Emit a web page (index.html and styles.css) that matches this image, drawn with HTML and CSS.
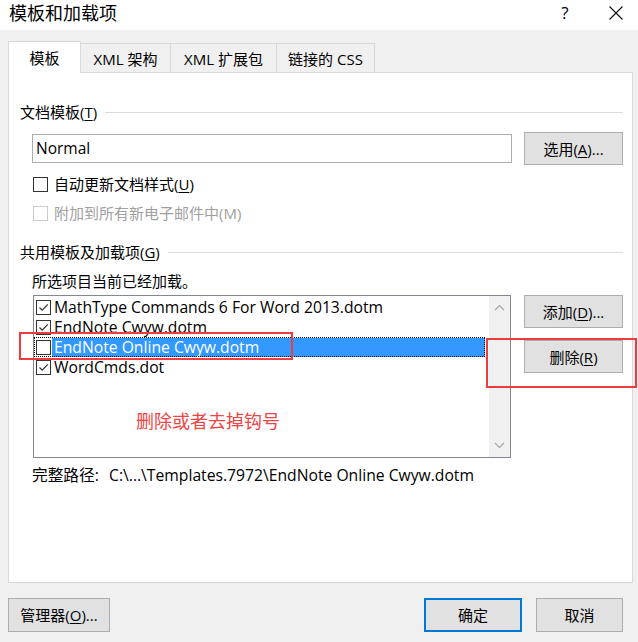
FILE: index.html
```html
<!DOCTYPE html>
<html lang="zh-CN">
<head>
  <meta charset="UTF-8" />
  <title>模板和加载项</title>
  <link rel="stylesheet" href="styles.css">
</head>
<body>

<div class="titlebar">
  <span class="title">模板和加载项</span>
  <span class="help">?</span>
  <span class="close">
    <svg width="16" height="16" viewBox="0 0 16 16"><path d="M1.5 1.5L14.5 14.5M14.5 1.5L1.5 14.5" stroke="#111" stroke-width="1.1" fill="none"/></svg>
  </span>
</div>

<div class="tabs">
  <div class="tab active">模板</div>
  <div class="tab tab-xml">XML 架构</div>
  <div class="tab tab-ext">XML 扩展包</div>
  <div class="tab tab-css">链接的 CSS</div>
</div>

<div class="panel">
  <div class="group-head">文档模板(<u>T</u>)</div>

  <div class="template-row">
    <div class="field">Normal</div>
    <div class="btn">选用(<u>A</u>)...</div>
  </div>

  <div class="check-row">
    <span class="cb"></span>
    <span>自动更新文档样式(<u>U</u>)</span>
  </div>
  <div class="check-row disabled">
    <span class="cb"></span>
    <span>附加到所有新电子邮件中(M)</span>
  </div>

  <div class="group-head second">共用模板及加载项(<u>G</u>)</div>
  <div class="hint">所选项目当前已经加载。</div>

  <div class="list-row">
    <div class="list">
      <div class="items">
        <div class="item">
          <span class="cb"><svg width="13" height="13" viewBox="0 0 13 13"><path d="M2.5 6.5L5.2 9.2L10.8 3.3" stroke="#333" stroke-width="1.2" fill="none"/></svg></span>
          <span class="item-text">MathType Commands 6 For Word 2013.dotm</span>
        </div>
        <div class="item">
          <span class="cb"><svg width="13" height="13" viewBox="0 0 13 13"><path d="M2.5 6.5L5.2 9.2L10.8 3.3" stroke="#333" stroke-width="1.2" fill="none"/></svg></span>
          <span class="item-text">EndNote Cwyw.dotm</span>
        </div>
        <div class="item focused">
          <span class="cb"></span>
          <span class="item-text selected">EndNote Online Cwyw.dotm</span>
        </div>
        <div class="item">
          <span class="cb"><svg width="13" height="13" viewBox="0 0 13 13"><path d="M2.5 6.5L5.2 9.2L10.8 3.3" stroke="#333" stroke-width="1.2" fill="none"/></svg></span>
          <span class="item-text">WordCmds.dot</span>
        </div>
        <!-- anotacao do print -->
        <div class="note">删除或者去掉钩号</div>
      </div>
      <div class="scroll">
        <svg width="11" height="7" viewBox="0 0 11 7"><path d="M1 6L5.5 1.5L10 6" stroke="#a6a6a6" stroke-width="1.2" fill="none"/></svg>
        <svg width="11" height="7" viewBox="0 0 11 7"><path d="M1 1L5.5 5.5L10 1" stroke="#a6a6a6" stroke-width="1.2" fill="none"/></svg>
      </div>
    </div>
    <div class="list-buttons">
      <div class="btn">添加(<u>D</u>)...</div>
      <div class="btn">删除(<u>R</u>)</div>
    </div>
  </div>

  <div class="path-row">
    <span class="path-label">完整路径:</span>
    <span>C:\...\Templates.7972\EndNote Online Cwyw.dotm</span>
  </div>

  <!-- marcas vermelhas por cima do print -->
  <div class="mark mark-row"></div>
  <div class="mark mark-btn"></div>
</div>

<div class="footer">
  <div class="btn btn-manager">管理器(<u>O</u>)...</div>
  <div class="spacer"></div>
  <div class="btn btn-ok">确定</div>
  <div class="btn btn-cancel">取消</div>
</div>

</body>
</html>
```

FILE: styles.css
```css
* {
  box-sizing: border-box;
}

body {
  margin: 0;
  width: 638px;
  height: 642px;
  overflow: hidden;
  background: #f0f0f0;
  color: #000;
  font-family: "Open Sans", "Noto Sans CJK SC", sans-serif;
  font-size: 15px;
  line-height: 20px;
}

u {
  text-underline-offset: 2px;
}

/* barra de titulo */
.titlebar {
  height: 30px;
  background: #fff;
  display: flex;
  align-items: center;
  padding: 0 14px 4px 9px;
}

.title {
  flex: 1;
  font-size: 18px;
  line-height: 24px;
}

.help {
  width: 20px;
  text-align: center;
  font-size: 17px;
  margin-right: 33px;
}

.close {
  display: flex;
  width: 16px;
  height: 16px;
}

/* abas */
.tabs {
  display: flex;
  align-items: flex-end;
  margin-top: 11px;
  padding-left: 8px;
  height: 31px;
}

.tab {
  height: 29px;
  border-top: 1px solid #d9d9d9;
  border-right: 1px solid #d9d9d9;
  background: #f0f0f0;
  display: flex;
  align-items: center;
  justify-content: center;
  padding-top: 2px;
}

.tab.active {
  position: relative;
  z-index: 1;
  width: 73px;
  height: 32px;
  margin-bottom: -1px;
  background: #fff;
  border-left: 1px solid #d9d9d9;
  padding-top: 0;
}

.tab-xml { width: 90px; }
.tab-ext { width: 106px; }
.tab-css { width: 98px; }

/* painel */
.panel {
  position: relative;
  width: 625px;
  height: 511px;
  margin-left: 8px;
  background: #fff;
  border: 1px solid #d9d9d9;
  padding: 29px 9px 0 11px;
}

.group-head {
  display: flex;
  align-items: center;
  height: 20px;
}

.group-head::after {
  content: "";
  flex: 1;
  height: 1px;
  background: #dcdcdc;
  margin-left: 8px;
}

.group-head.second {
  margin-top: 19px;
}

.template-row {
  display: flex;
  align-items: center;
  margin-top: 10px;
  padding-left: 12px;
  gap: 12px;
}

.field {
  width: 480px;
  height: 29px;
  border: 1px solid #abadb3;
  padding: 3px 0 0 3px;
  font-size: 15.5px;
}

.btn {
  width: 99px;
  height: 33px;
  background: #e1e1e1;
  border: 1px solid #adadad;
  display: flex;
  align-items: center;
  justify-content: center;
}

.check-row {
  display: flex;
  align-items: center;
  height: 20px;
  margin-top: 9px;
  padding-left: 13px;
  gap: 6px;
}

.cb {
  width: 15px;
  height: 15px;
  border: 1px solid #333;
  background: #fff;
  display: flex;
  align-items: center;
  justify-content: center;
  flex-shrink: 0;
}

.check-row.disabled {
  color: #a0a0a0;
}

.check-row.disabled .cb {
  border-color: #cccccc;
}

.hint {
  margin-top: 9px;
  padding-left: 12px;
}

/* lista de suplementos */
.list-row {
  display: flex;
  align-items: flex-start;
  margin-top: 4px;
  padding-left: 13px;
  gap: 13px;
}

.list {
  width: 478px;
  height: 163px;
  border: 1px solid #828790;
  background: #fff;
  display: flex;
}

.items {
  flex: 1;
  padding: 1px 4px 0 0;
}

.item {
  display: flex;
  align-items: center;
  height: 20px;
  padding-left: 2px;
  font-size: 15.7px;
}

.item .cb {
  margin-right: 1px;
}

.item-text {
  padding-left: 2px;
  line-height: 20px;
}

.item.focused {
  outline: 1px dotted #000;
  outline-offset: -1px;
}

.item-text.selected {
  flex: 1;
  height: 19px;
  background: #3399ff;
  color: #fff;
  line-height: 19px;
}

.note {
  margin-top: 31px;
  padding-left: 102px;
  font-family: "Noto Sans CJK SC", sans-serif;
  font-size: 18px;
  line-height: 24px;
  color: #f04545;
}

.scroll {
  width: 21px;
  background: #f0f0f0;
  display: flex;
  flex-direction: column;
  justify-content: space-between;
  align-items: center;
  padding: 8px 0 8px;
}

.list-buttons {
  display: flex;
  flex-direction: column;
  gap: 12px;
}

.path-row {
  display: flex;
  margin-top: 7px;
  padding-left: 12px;
  font-size: 15.7px;
}

.path-label {
  width: 77px;
}

/* anotacoes */
.mark {
  position: absolute;
  border: 2px solid #ee3b3b;
}

.mark-row {
  left: 10px;
  top: 259px;
  width: 274px;
  height: 28px;
}

.mark-btn {
  left: 477px;
  top: 265px;
  width: 151px;
  height: 50px;
}

/* rodape */
.footer {
  display: flex;
  margin-top: 15px;
  padding: 0 15px 0 8px;
}

.footer .btn {
  height: 34px;
}

.btn-manager {
  width: 102px;
}

.spacer {
  flex: 1;
}

.btn-ok {
  width: 98px;
  border: 2px solid #0078d7;
  margin-right: 14px;
}

.btn-cancel {
  width: 87px;
}
```
